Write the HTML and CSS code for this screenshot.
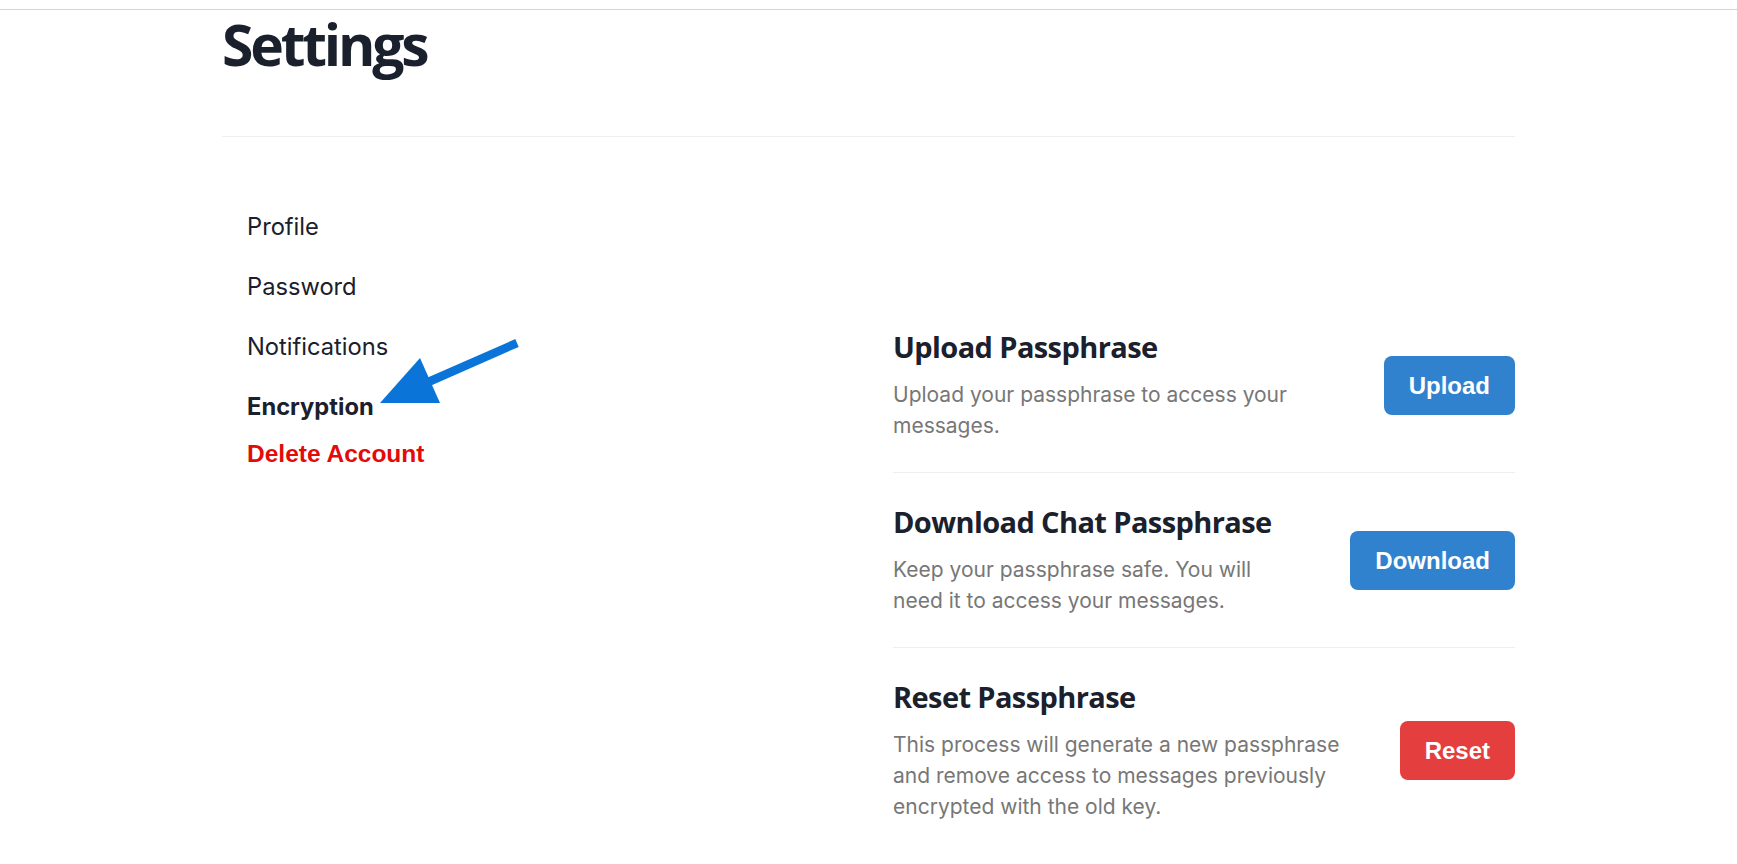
FILE: index.html
```html
<!DOCTYPE html>
<html lang="en">
<head>
    <meta charset="UTF-8">
    <meta name="viewport" content="width=device-width, initial-scale=1.0">
    <title>Settings</title>
    <link rel="stylesheet" href="styles.css">
</head>
<body>
    <div class="topbar"></div>
    <div class="container">
        <h1 class="page-title">Settings</h1>

        <div class="settings-layout">
            <nav class="side-nav">
                <a href="#" class="nav-item">Profile</a>
                <a href="#" class="nav-item">Password</a>
                <a href="#" class="nav-item">Notifications</a>
                <a href="#" class="nav-item active">Encryption</a>
                <button class="delete-btn">Delete Account</button>
            </nav>

            <section class="panel">
                <div class="setting-row">
                    <div class="setting-text">
                        <h2>Upload Passphrase</h2>
                        <p>Upload your passphrase to access your messages.</p>
                    </div>
                    <button class="btn btn-blue">Upload</button>
                </div>
                <div class="setting-row">
                    <div class="setting-text">
                        <h2>Download Chat Passphrase</h2>
                        <p>Keep your passphrase safe. You will need it to access your messages.</p>
                    </div>
                    <button class="btn btn-blue">Download</button>
                </div>
                <div class="setting-row">
                    <div class="setting-text">
                        <h2>Reset Passphrase</h2>
                        <p>This process will generate a new passphrase and remove access to messages previously encrypted with the old key.</p>
                    </div>
                    <button class="btn btn-red">Reset</button>
                </div>
            </section>
        </div>
    </div>

    <!-- annotation arrow pointing at the active tab -->
    <svg class="pointer-arrow" width="160" height="80" viewBox="0 0 160 80">
        <line x1="147" y1="8" x2="56" y2="48" stroke="#0b74d8" stroke-width="8.5"/>
        <polygon points="10,68 50,23 70,68" fill="#0b74d8"/>
    </svg>
</body>
</html>
```

FILE: styles.css
```css
body {
    margin: 0;
    background: #fff;
    font-family: Inter, "Noto Sans", sans-serif;
    color: #1a202c;
}
.topbar {
    height: 9px;
    border-bottom: 1px solid #d3d6d9;
}
.container {
    width: 1293px;
    margin: 0 auto;
}
.page-title {
    font-family: "Open Sans", "Noto Sans", sans-serif;
    font-size: 57px;
    font-weight: 700;
    line-height: 68px;
    letter-spacing: -3.2px;
    margin: 0;
    padding-bottom: 58px;
    border-bottom: 1px solid #eeeeee;
}
.settings-layout {
    display: grid;
    grid-template-columns: 671px 622px;
    padding-top: 60px;
}
.side-nav {
    display: flex;
    flex-direction: column;
    align-items: flex-start;
    padding-left: 25px;
}
.nav-item {
    font-size: 23.7px;
    line-height: 34px;
    padding: 13px 0;
    color: #1a202c;
    text-decoration: none;
}
.nav-item.active {
    font-weight: 700;
}
.delete-btn {
    margin-top: 3px;
    padding: 0;
    border: none;
    background: none;
    font-family: "Liberation Sans", Arial, sans-serif;
    font-size: 24.5px;
    font-weight: 700;
    color: #e30a0a;
    cursor: pointer;
}
.panel {
    margin-top: 101px;
}
.setting-row {
    display: flex;
    align-items: center;
    gap: 50px;
    padding: 31px 0;
    border-bottom: 1px solid #eeeeee;
}
.setting-row:last-child {
    border-bottom: none;
}
.setting-text {
    flex: 1;
}
.setting-text h2 {
    font-family: "Open Sans", "Noto Sans", sans-serif;
    font-size: 29px;
    font-weight: 700;
    line-height: 36px;
    letter-spacing: -0.6px;
    margin: 0 0 14px;
}
.setting-text p {
    font-size: 21px;
    line-height: 31px;
    color: #777777;
    margin: 0;
}
.btn {
    font-family: "Liberation Sans", Arial, sans-serif;
    font-size: 24px;
    font-weight: 700;
    line-height: 35px;
    padding: 12px 25px;
    border: none;
    border-radius: 8px;
    color: #fff;
    cursor: pointer;
}
.btn-blue {
    background-color: #3182ce;
}
.btn-red {
    background-color: #e53e3e;
}
.pointer-arrow {
    position: absolute;
    left: 370px;
    top: 335px;
}
```
